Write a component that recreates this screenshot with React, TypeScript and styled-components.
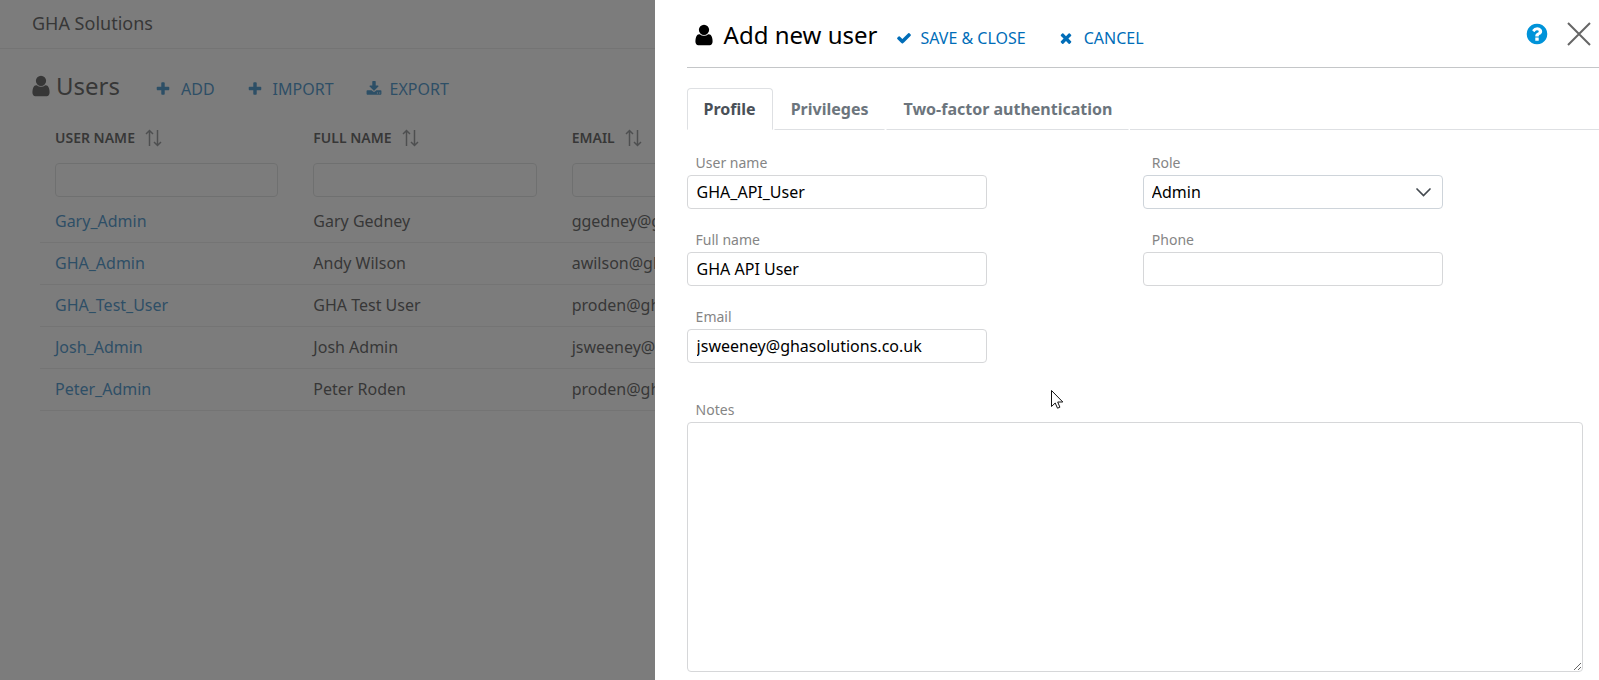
import React, { useState } from "react";
import styled, { createGlobalStyle } from "styled-components";

const GlobalStyle = createGlobalStyle`
  *, *::before, *::after { box-sizing: border-box; }
  body {
    margin: 0;
    background: #fff;
    color: #212121;
    font: 16px/24px "Noto Sans", "Open Sans", sans-serif;
  }
  button, input, select, textarea { font: inherit; }
  h1, h2 { margin: 0; font-weight: 400; }
`;

const ICONS = {
  user: "M1536 1399q0 109-62.5 187t-150.5 78h-854q-88 0-150.5-78t-62.5-187q0-85 8.5-160.5t31.5-152 58.5-131 94-89 134.5-34.5q131 128 313 128t313-128q76 0 134.5 34.5t94 89 58.5 131 31.5 152 8.5 160.5zm-256-887q0 159-112.5 271.5t-271.5 112.5-271.5-112.5-112.5-271.5 112.5-271.5 271.5-112.5 271.5 112.5 112.5 271.5z",
  plus: "M1600 736v192q0 40-28 68t-68 28h-416v416q0 40-28 68t-68 28h-192q-40 0-68-28t-28-68v-416h-416q-40 0-68-28t-28-68v-192q0-40 28-68t68-28h416v-416q0-40 28-68t68-28h192q40 0 68 28t28 68v416h416q40 0 68 28t28 68z",
  download: "M1344 1344q0-26-19-45t-45-19-45 19-19 45 19 45 45 19 45-19 19-45zm256 0q0-26-19-45t-45-19-45 19-19 45 19 45 45 19 45-19 19-45zm128-224v320q0 40-28 68t-68 28h-1472q-40 0-68-28t-28-68v-320q0-40 28-68t68-28h465l135 136q58 56 136 56t136-56l136-136h464q40 0 68 28t28 68zm-325-569q17 41-14 70l-448 448q-18 19-45 19t-45-19l-448-448q-31-29-14-70 17-39 59-39h256v-448q0-26 19-45t45-19h256q26 0 45 19t19 45v448h256q42 0 59 39z",
  check: "M1671 566q0 40-28 68l-724 724-136 136q-28 28-68 28t-68-28l-136-136-362-362q-28-28-28-68t28-68l136-136q28-28 68-28t68 28l294 295 656-657q28-28 68-28t68 28l136 136q28 28 28 68z",
  times: "M1490 1322q0 40-28 68l-136 136q-28 28-68 28t-68-28l-294-294-294 294q-28 28-68 28t-68-28l-136-136q-28-28-28-68t28-68l294-294-294-294q-28-28-28-68t28-68l136-136q28-28 68-28t68 28l294 294 294-294q28-28 68-28t68 28l136 136q28 28 28 68t-28 68l-294 294 294 294q28 28 28 68z",
  help: "M1024 1376v-192q0-14-9-23t-23-9h-192q-14 0-23 9t-9 23v192q0 14 9 23t23 9h192q14 0 23-9t9-23zm256-672q0-88-55.5-163t-138.5-116-170-41q-243 0-371 213-15 24 8 42l132 100q7 6 19 6 16 0 25-12 53-68 86-92 34-24 86-24 48 0 85.5 26t37.5 59q0 38-20 61t-68 45q-63 28-115.5 86.5t-52.5 125.5v36q0 14 9 23t23 9h192q14 0 23-9t9-23q0-19 21.5-49.5t54.5-49.5q32-18 49-28.5t46-35 44.5-48 28-60.5 12.5-81zm384 192q0 209-103 385.5t-279.5 279.5-385.5 103-385.5-103-279.5-279.5-103-385.5 103-385.5 279.5-279.5 385.5-103 385.5 103 279.5 279.5 103 385.5z",
};

const Svg = styled.svg`
  flex: none;
  display: block;
  fill: currentColor;
`;

function Icon({ name, size = 16 }: { name: keyof typeof ICONS; size?: number }) {
  return (
    <Svg width={size} height={size} viewBox="0 0 1792 1792" aria-hidden="true">
      <path d={ICONS[name]} />
    </Svg>
  );
}

const SortSvg = styled.svg`
  display: block;
  fill: none;
  stroke: #6b6f73;
  stroke-width: 1.5;
`;

function SortIcon() {
  return (
    <SortSvg width="17" height="18" viewBox="0 0 17 18" aria-hidden="true">
      <path d="M4.5 17V1.8M1 5l3.500-3.500L8 5M12.500 1v15.200M9 13l3.500 3.500L16 13" />
    </SortSvg>
  );
}

const Page = styled.div`
  min-height: 100vh;
`;

const TopBar = styled.header`
  height: 49px;
  padding: 11px 32px;
  border-bottom: 1px solid #e6e6e6;
  font-size: 18px;
`;

const PageHead = styled.div`
  display: flex;
  align-items: center;
  padding: 16px 29px 0;
  height: 57px;
`;

const PageTitle = styled.h1`
  display: flex;
  align-items: center;
  gap: 3px;
  margin-right: 35px;
  font-size: 24px;
  line-height: 36px;
`;

const Action = styled.button<{ $gap?: number }>`
  display: flex;
  align-items: center;
  gap: ${(p) => p.$gap ?? 8}px;
  padding: 0;
  border: 0;
  background: none;
  color: #006db8;
  line-height: 24px;
  cursor: pointer;
`;

const PageActions = styled.div`
  display: flex;
  gap: 32px;
  padding-top: 6px;
`;

const TableArea = styled.main`
  padding: 10px 9px 0 40px;
`;

const UserTable = styled.table`
  width: 50%;
  table-layout: fixed;
  border-collapse: collapse;
`;

const HeadCell = styled.th`
  height: 44px;
  padding: 0 15px;
  text-align: left;
  font-size: 14px;
  line-height: 20px;
  font-weight: 600;
`;

const SortButton = styled.button`
  display: flex;
  align-items: center;
  gap: 10px;
  padding: 0;
  border: 0;
  background: none;
  color: inherit;
`;

const FilterCell = styled.td`
  padding: 3px 20px 3px 15px;
`;

const Cell = styled.td`
  height: 42px;
  padding: 0 15px;
  border-bottom: 1px solid #e6e6e6;
  white-space: nowrap;
  a { color: #006db8; text-decoration: none; }
`;

const TextInput = styled.input`
  display: block;
  width: 100%;
  height: 34px;
  padding: 0 9px;
  border: 1px solid #d6d7d9;
  border-radius: 4px;
  background: #fff;
  color: #000;
  outline: none;
`;

const Backdrop = styled.div`
  position: fixed;
  inset: 0;
  display: flex;
  justify-content: flex-end;
  background: rgba(65, 65, 65, 0.69);
`;

const Drawer = styled.section`
  display: flex;
  flex-direction: column;
  width: calc(59% + 1px);
  height: 100%;
  padding-left: 32px;
  background: #fff;
  color: #000;
  overflow: auto;
`;

const DrawerHead = styled.header`
  flex: none;
  display: flex;
  align-items: center;
  height: 68px;
  padding: 0 8px 0 5px;
  border-bottom: 1px solid #c4c6c8;
`;

const DrawerTitle = styled.h2`
  display: flex;
  align-items: center;
  gap: 8px;
  margin-right: 19px;
  padding-top: 2px;
  font-size: 24px;
  line-height: 36px;
`;

const DrawerActions = styled.div`
  display: flex;
  gap: 32px;
  flex: 1;
  padding-top: 8px;
`;

const IconButton = styled.button`
  display: flex;
  align-items: center;
  justify-content: center;
  height: 24px;
  margin-left: 18px;
  padding: 0;
  border: 0;
  background: none;
  color: #0093d9;
  cursor: pointer;
`;

const CloseSvg = styled.svg`
  stroke: #666;
  stroke-width: 2;
`;

const Tabs = styled.div`
  flex: none;
  display: flex;
  gap: 1px;
  margin-top: 20px;
  &::after {
    content: "";
    flex: 1;
    border-bottom: 1px solid #dee0e3;
  }
`;

const Tab = styled.button<{ $active: boolean }>`
  height: 42px;
  padding: 0 16px;
  border: 1px solid ${(p) => (p.$active ? "#dee0e3" : "transparent")};
  border-bottom-color: ${(p) => (p.$active ? "transparent" : "#dee0e3")};
  border-radius: ${(p) => (p.$active ? "4px 4px 0 0" : "0")};
  background: none;
  color: ${(p) => (p.$active ? "#495057" : "#6c757d")};
  font-weight: 700;
`;

const Form = styled.form`
  flex: 1;
  display: flex;
  flex-direction: column;
  gap: 37px;
  padding: 23px 0 8px;
`;

const Fields = styled.div`
  display: grid;
  grid-template-columns: 1fr 1fr;
  gap: 21px 0;
`;

const Field = styled.div`
  width: 300px;
  max-width: 95%;
`;

const Label = styled.label`
  display: block;
  padding: 0 9px 2px;
  color: #858585;
  font-size: 14px;
  line-height: 20px;
`;

const SelectWrap = styled.div`
  position: relative;
`;

const Select = styled.select`
  display: block;
  width: 100%;
  height: 34px;
  padding: 0 32px 0 8px;
  border: 1px solid #ced4da;
  border-radius: 4px;
  background: #fff;
  color: #000;
  appearance: none;
  outline: none;
`;

const Chevron = styled.svg`
  position: absolute;
  top: 12px;
  right: 11px;
  fill: none;
  stroke: #444a50;
  stroke-width: 1.7;
  stroke-linecap: round;
  pointer-events: none;
`;

const NotesField = styled.div`
  flex: 1;
  display: flex;
  flex-direction: column;
  padding-right: 16px;
`;

const NotesArea = styled.textarea`
  flex: 1;
  min-height: 120px;
  padding: 8px;
  border: 1px solid #d6d7d9;
  border-radius: 4px;
  resize: vertical;
  outline: none;
`;

const Pointer = styled.svg`
  position: fixed;
  left: 1050px;
  top: 389px;
  pointer-events: none;
`;

const users = [
  ["Gary_Admin", "Gary Gedney", "ggedney@ghasolutions.co.uk"],
  ["GHA_Admin", "Andy Wilson", "awilson@ghasolutions.co.uk"],
  ["GHA_Test_User", "GHA Test User", "proden@ghasolutions.co.uk"],
  ["Josh_Admin", "Josh Admin", "jsweeney@ghasolutions.co.uk"],
  ["Peter_Admin", "Peter Roden", "proden@ghasolutions.co.uk"],
];

const columns = ["USER NAME", "FULL NAME", "EMAIL"];
const tabs = ["Profile", "Privileges", "Two-factor authentication"];

function TextField({ id, label, value = "" }: { id: string; label: string; value?: string }) {
  return (
    <Field>
      <Label htmlFor={id}>{label}</Label>
      <TextInput id={id} defaultValue={value} />
    </Field>
  );
}

export default function App() {
  const [tab, setTab] = useState(tabs[0]);
  return (
    <>
      <GlobalStyle />
      <Page>
        <TopBar>GHA Solutions</TopBar>
        <PageHead>
          <PageTitle>
            <Icon name="user" size={24} />
            Users
          </PageTitle>
          <PageActions>
            <Action $gap={10}><Icon name="plus" />ADD</Action>
            <Action $gap={10}><Icon name="plus" />IMPORT</Action>
            <Action><Icon name="download" />EXPORT</Action>
          </PageActions>
        </PageHead>
        <TableArea>
          <UserTable>
            <thead>
              <tr>
                {columns.map((c) => (
                  <HeadCell key={c}><SortButton>{c}<SortIcon /></SortButton></HeadCell>
                ))}
              </tr>
            </thead>
            <tbody>
              <tr>
                {columns.map((c) => (
                  <FilterCell key={c}><TextInput aria-label={`Filter ${c}`} /></FilterCell>
                ))}
              </tr>
              {users.map(([name, full, email]) => (
                <tr key={name}>
                  <Cell><a href="#user">{name}</a></Cell>
                  <Cell>{full}</Cell>
                  <Cell>{email}</Cell>
                </tr>
              ))}
            </tbody>
          </UserTable>
        </TableArea>
      </Page>
      <Backdrop>
        <Drawer role="dialog" aria-labelledby="drawer-title">
          <DrawerHead>
            <DrawerTitle id="drawer-title">
              <Icon name="user" size={24} />
              Add new user
            </DrawerTitle>
            <DrawerActions>
              <Action><Icon name="check" />SAVE &amp; CLOSE</Action>
              <Action $gap={10}><Icon name="times" />CANCEL</Action>
            </DrawerActions>
            <IconButton aria-label="Help"><Icon name="help" size={24} /></IconButton>
            <IconButton aria-label="Close">
              <CloseSvg width="24" height="24" viewBox="0 0 24 24">
                <path d="M1 1l22 22M23 1L1 23" />
              </CloseSvg>
            </IconButton>
          </DrawerHead>
          <Tabs role="tablist">
            {tabs.map((t) => (
              <Tab key={t} role="tab" aria-selected={t === tab} $active={t === tab} onClick={() => setTab(t)}>
                {t}
              </Tab>
            ))}
          </Tabs>
          <Form>
            <Fields>
              <TextField id="username" label="User name" value="GHA_API_User" />
              <Field>
                <Label htmlFor="role">Role</Label>
                <SelectWrap>
                  <Select id="role" defaultValue="Admin">
                    <option>Admin</option>
                  </Select>
                  <Chevron width="17" height="10" viewBox="0 0 17 10" aria-hidden="true">
                    <path d="M2 2l6.500 6.500 6.500-6.500" />
                  </Chevron>
                </SelectWrap>
              </Field>
              <TextField id="fullname" label="Full name" value="GHA API User" />
              <TextField id="phone" label="Phone" />
              <TextField id="email" label="Email" value="jsweeney@ghasolutions.co.uk" />
            </Fields>
            <NotesField>
              <Label htmlFor="notes">Notes</Label>
              <NotesArea id="notes" />
            </NotesField>
          </Form>
        </Drawer>
      </Backdrop>
      <Pointer width="14" height="21" viewBox="0 0 14 21" aria-hidden="true">
        <path
          d="M1.500 1.500v16l3.700-3.500 2.300 5.200 2.400-1-2.200-5.200h5.100z"
          fill="#fff"
          stroke="#111"
        />
      </Pointer>
    </>
  );
}
